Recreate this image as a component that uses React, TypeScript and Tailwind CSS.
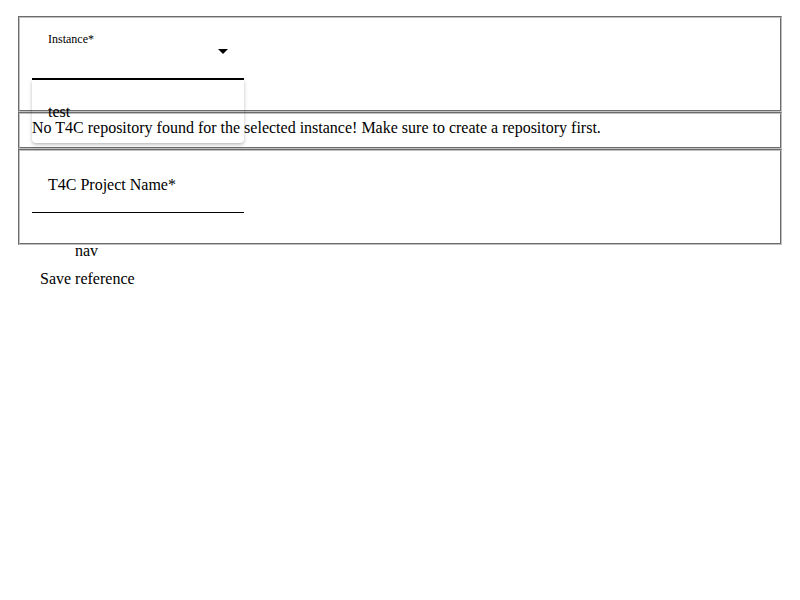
import React from 'react';

const boxClass =
  "mx-[2px] border-2 [border-style:groove] border-[#c0c0c0] px-3";

export default function App() {
  return (
    <div className="p-4 font-['Liberation_Serif',serif] text-base text-black">
      {/* Instance select, menu open */}
      <fieldset className={`${boxClass} pt-[6px] pb-[10px]`}>
        <div className="relative flex flex-col w-[212px] h-[56px] mb-[20px] border-b-2 border-black pt-2 pl-4">
          <span className="text-xs leading-[14px]">Instance*</span>
          <svg className="absolute right-[9px] top-[15px] w-6 h-6" viewBox="0 0 24 24">
            <path d="M7 10l5 5 5-5z" fill="black" />
          </svg>
          {/* dropdown menu */}
          <div className="absolute left-0 top-[56px] w-[212px] h-[63px] rounded-b shadow-[0_2px_4px_rgba(0,0,0,0.2),0_1px_2px_rgba(0,0,0,0.1)] z-10">
            <div className="pt-[23px] pl-4 leading-[18px]">test</div>
          </div>
        </div>
      </fieldset>

      <fieldset className={`${boxClass} pt-[5px] pb-[10px]`}>
        <p className="leading-[18px]">
          No T4C repository found for the selected instance! Make sure to create a repository first.
        </p>
      </fieldset>

      <fieldset className={`${boxClass} pt-[6px] pb-[10px]`}>
        <div className="flex flex-col w-[212px] h-[56px] mb-[20px] border-b border-black pt-[19px] pl-4">
          <span className="leading-[18px]">T4C Project Name*</span>
        </div>
      </fieldset>

      <div className="flex flex-col -mt-[3px]">
        <span className="ml-[59px] leading-[18px]">nav</span>
        <span className="mt-[10px] ml-6 leading-[18px]">Save reference</span>
      </div>
    </div>
  );
}
